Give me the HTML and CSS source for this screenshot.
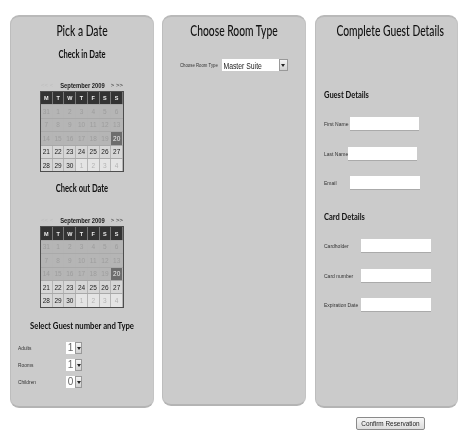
FILE: index.html
```html
<!DOCTYPE html>
<html lang="en">
<head>
<meta charset="utf-8">
<title>Reservation</title>
<link rel="stylesheet" href="styles.css">
</head>
<body>
<main class="page">
  <div class="columns">
    <section class="panel panel-date">
      <h1>Pick a Date</h1>
      <h2 class="check-in">Check in Date</h2>
      <div class="calendar">
        <div class="cal-nav"><span class="nav-off">&lt;&lt; &lt;</span><b>September 2009</b><span class="nav-on">&gt; &gt;&gt;</span></div>
        <div class="cal-grid">
          <span class="hd">M</span><span class="hd">T</span><span class="hd">W</span><span class="hd">T</span><span class="hd">F</span><span class="hd">S</span><span class="hd">S</span>
          <span class="past">31</span><span class="past">1</span><span class="past">2</span><span class="past">3</span><span class="past">4</span><span class="past">5</span><span class="past">6</span>
          <span class="past">7</span><span class="past">8</span><span class="past">9</span><span class="past">10</span><span class="past">11</span><span class="past">12</span><span class="past">13</span>
          <span class="past">14</span><span class="past">15</span><span class="past">16</span><span class="past">17</span><span class="past">18</span><span class="past">19</span><span class="today">20</span>
          <span>21</span><span>22</span><span>23</span><span>24</span><span>25</span><span>26</span><span>27</span>
          <span>28</span><span>29</span><span>30</span><span class="next">1</span><span class="next">2</span><span class="next">3</span><span class="next">4</span>
        </div>
      </div>
      <h2 class="check-out">Check out Date</h2>
      <div class="calendar">
        <div class="cal-nav"><span class="nav-off">&lt;&lt; &lt;</span><b>September 2009</b><span class="nav-on">&gt; &gt;&gt;</span></div>
        <div class="cal-grid">
          <span class="hd">M</span><span class="hd">T</span><span class="hd">W</span><span class="hd">T</span><span class="hd">F</span><span class="hd">S</span><span class="hd">S</span>
          <span class="past">31</span><span class="past">1</span><span class="past">2</span><span class="past">3</span><span class="past">4</span><span class="past">5</span><span class="past">6</span>
          <span class="past">7</span><span class="past">8</span><span class="past">9</span><span class="past">10</span><span class="past">11</span><span class="past">12</span><span class="past">13</span>
          <span class="past">14</span><span class="past">15</span><span class="past">16</span><span class="past">17</span><span class="past">18</span><span class="past">19</span><span class="today">20</span>
          <span>21</span><span>22</span><span>23</span><span>24</span><span>25</span><span>26</span><span>27</span>
          <span>28</span><span>29</span><span>30</span><span class="next">1</span><span class="next">2</span><span class="next">3</span><span class="next">4</span>
        </div>
      </div>
      <h2 class="guest-head">Select Guest number and Type</h2>
      <div class="counts">
        <div class="count-row"><span class="small">Adults</span><div class="pick pick-num"><span class="pick-val">1</span><span class="pick-btn"></span></div></div>
        <div class="count-row"><span class="small">Rooms</span><div class="pick pick-num"><span class="pick-val">1</span><span class="pick-btn"></span></div></div>
        <div class="count-row"><span class="small">Children</span><div class="pick pick-num"><span class="pick-val">0</span><span class="pick-btn"></span></div></div>
      </div>
    </section>

    <section class="panel panel-room">
      <h1>Choose Room Type</h1>
      <div class="room-row">
        <span class="small">Choose Room Type</span>
        <div class="pick pick-room"><span class="pick-val">Master Suite</span><span class="pick-btn"></span></div>
      </div>
    </section>

    <section class="panel panel-guest">
      <h1>Complete Guest Details</h1>
      <h2 class="guest-title">Guest Details</h2>
      <div class="field f-first"><span class="small">First Name</span><input type="text" aria-label="First Name"></div>
      <div class="field f-last"><span class="small">Last Name</span><input type="text" aria-label="Last Name"></div>
      <div class="field f-email"><span class="small">Email</span><input type="text" aria-label="Email"></div>
      <h2 class="card-title">Card Details</h2>
      <div class="field f-card"><span class="small">Cardholder</span><input type="text" aria-label="Cardholder"></div>
      <div class="field f-card"><span class="small">Card number</span><input type="text" aria-label="Card number"></div>
      <div class="field f-card"><span class="small">Expiration Date</span><input type="text" aria-label="Expiration Date"></div>
    </section>
  </div>
  <div class="actions"><button type="button" class="confirm"><span class="confirm-label">Confirm Reservation</span></button></div>
</main>
</body>
</html>
```
FILE: styles.css
```css
* { box-sizing: border-box; }
html, body { margin: 0; padding: 0; background: #fff; }
body { width: 467px; height: 447px; overflow: hidden; font-family: "Liberation Sans", sans-serif; color: #111; }
.page { padding: 15px 9px 0 10px; filter: blur(0.35px); }
.columns { display: flex; gap: 8px; align-items: flex-start; }
.panel { width: 144px; height: 393px; background: #cbcbcb; border-radius: 9px; border-top: 2px solid #b9b9b9; border-left: 1px solid #bdbdbd; border-bottom: 2px solid #b4b4b4; border-right: 1px solid #c4c4c4; }
.panel-room { height: 391px; }
.panel-guest { margin-left: 1px; width: 143px; }
h1 { margin: 5px 0 0; font-family: "Lato", sans-serif; font-size: 14.5px; line-height: 17px; font-weight: 500; text-align: center; color: #111; white-space: nowrap; transform: scaleX(0.71); }
h2 { margin: 0; font-family: "Lato", sans-serif; font-size: 10.5px; line-height: 13px; font-weight: 700; text-align: center; color: #111; white-space: nowrap; transform: scaleX(0.72); }
.small { display: inline-block; font-size: 5.5px; line-height: 8px; color: #333; white-space: nowrap; transform: scaleX(0.88); transform-origin: left center; }
.check-in { margin-top: 9px; }
.check-out { margin-top: 10px; }
.calendar { width: 84px; margin: 0 0 0 29px; }
.check-in + .calendar { margin-top: 20px; }
.check-out + .calendar { margin-top: 21px; }
.cal-nav { display: grid; grid-template-columns: 1fr auto 1fr; align-items: center; height: 8px; margin-bottom: 2px; font-size: 6px; padding: 0 1px; white-space: nowrap; }
.cal-nav b { font-weight: 700; font-size: 7px; color: #222; width: 45px; display: flex; justify-content: center; transform: scaleX(0.83); }
.nav-off { color: #bdbdbd; }
.nav-on { color: #333; justify-self: end; }
.cal-grid { display: grid; grid-template-columns: repeat(7, 1fr); grid-auto-rows: 12.4px; gap: 1px 0; background: #a9a9a9; border: 1px solid #4d4d4d; }
.cal-grid span { display: flex; align-items: center; justify-content: center; font-size: 6.5px; background: #d6d6d6; color: #222; border-right: 1px solid #b4b4b4; }
.cal-grid .hd { background: #333; color: #eee; font-weight: 700; font-size: 5.5px; border-right: 1px solid #777; }
.cal-grid .past { background: #b5b5b5; color: #9d9d9d; }
.cal-grid .today { background: #6d6d6d; color: #eee; }
.cal-grid .next { background: #e4e4e4; color: #b4b4b4; }
.guest-head { margin-top: 11px; font-size: 10px; transform: scaleX(0.77); }
.counts { display: flex; flex-direction: column; gap: 5px; margin-top: 10px; padding-left: 7px; }
.count-row { display: flex; align-items: center; }
.count-row .small { width: 48px; }
.pick { display: flex; align-items: center; background: #fff; height: 12px; }
.pick-num { width: 16px; }
.pick-val { flex: 1; font-size: 10px; color: #666; text-align: center; }
.pick-btn { width: 7px; height: 100%; background: linear-gradient(#f4f4f4, #d0d0d0); border: 1px solid #999; position: relative; }
.pick-btn::after { content: ""; position: absolute; left: 1px; top: 4px; border: 2px solid transparent; border-top: 3px solid #222; border-bottom: 0; }
.room-row { display: flex; align-items: center; gap: 2px; margin: 20px 0 0 17px; }
.room-row .small { width: 40px; transform: scaleX(0.78); }
.pick-room { width: 66px; }
.pick-room .pick-val { font-size: 9.5px; color: #222; text-align: left; padding-left: 2px; white-space: nowrap; transform: scaleX(0.72); transform-origin: left center; }
.pick-room .pick-btn { width: 9px; }
.guest-title { margin: 49px 0 0 8px; text-align: left; font-size: 10px; transform-origin: left center; transform: scaleX(0.75); }
.card-title { margin: 20px 0 0 8px; text-align: left; font-size: 10px; transform-origin: left center; transform: scaleX(0.75); }
.field { display: flex; align-items: center; padding-left: 8px; }
.field .small { transform: none; font-size: 5px; }
.field input { height: 14px; padding: 0; background: #fff; border: 0; border-bottom: 1px solid #aaa; border-radius: 0; outline: 0; }
.f-first { margin-top: 16px; }
.f-first .small { width: 26px; }
.f-first input { width: 69px; }
.f-last { margin-top: 16px; }
.f-last .small { width: 24px; }
.f-last input { width: 69px; }
.f-email { margin-top: 15px; }
.f-email .small { width: 26px; }
.f-email input { width: 70px; }
.f-card { margin-top: 16px; }
.f-card:last-child { margin-top: 15px; }
.f-card .small { width: 37px; }
.f-card input { width: 70px; }
.actions { display: flex; justify-content: flex-end; margin-top: 9px; padding-right: 33px; }
.confirm { display: flex; align-items: center; justify-content: center; width: 69px; height: 13px; padding: 0; font: 400 8px "Liberation Sans", sans-serif; color: #222; background: linear-gradient(#f6f6f6, #dcdcdc); border: 1px solid #8a8a8a; border-radius: 2px; white-space: nowrap; }
.confirm-label { display: block; transform: scaleX(0.8); }
```
